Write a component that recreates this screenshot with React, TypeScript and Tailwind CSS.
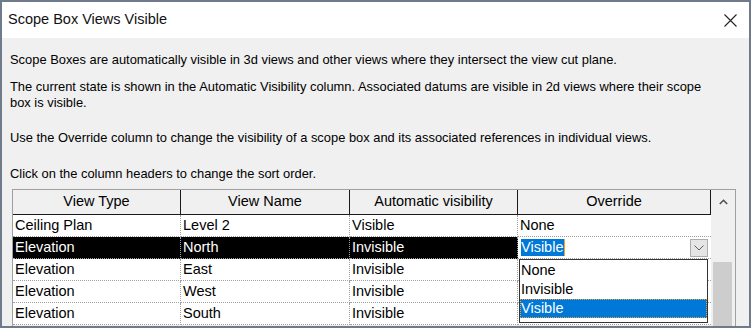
import React from 'react';

const rows = [
  { type: 'Ceiling Plan', name: 'Level 2', auto: 'Visible', override: 'None' },
  { type: 'Elevation', name: 'North', auto: 'Invisible', override: 'Visible' },
  { type: 'Elevation', name: 'East', auto: 'Invisible', override: '' },
  { type: 'Elevation', name: 'West', auto: 'Invisible', override: '' },
  { type: 'Elevation', name: 'South', auto: 'Invisible', override: '' },
];

const cell = 'h-[22px] leading-[21px] pl-[2px] border-r border-b border-dotted border-[#a0a0a0] whitespace-nowrap overflow-hidden';

function OverrideCombo() {
  return (
    <div className="relative h-[22px] border-b border-dotted border-[#a0a0a0] bg-white flex items-center justify-between pl-[3px] pr-[3px]">
      <span className="bg-[#0078d7] text-white leading-[17px] pr-[1px] border-r border-[#f0a030]">Visible</span>
      <button className="w-[18px] h-[18px] bg-[#e5e5e5] border border-[#adadad] flex items-center justify-center">
        <svg width="10" height="6" viewBox="0 0 10 6" fill="none" stroke="#606060" strokeWidth="1">
          <path d="M0.5 0.5 L5 5 L9.5 0.5" />
        </svg>
      </button>

      {/* open dropdown list */}
      <div className="absolute left-[1px] top-[22px] w-[189px] h-[64px] bg-white text-black border border-[#333] pt-[1px] z-10">
        <div className="h-[19px] leading-[19px] pl-[1px]">None</div>
        <div className="h-[19px] leading-[19px] pl-[1px]">Invisible</div>
        <div className="h-[19px] leading-[17px] bg-[#0078d7] text-white border border-dotted border-[#f0a030]">Visible</div>
      </div>
    </div>
  );
}

export default function App() {
  return (
    <div className="w-[754px] h-[331px] bg-white font-['Liberation_Sans',Arial,sans-serif] text-black">
      <div className="w-[751px] h-[328px] border-2 border-[#6f7b8b] flex flex-col overflow-hidden">
        {/* Title bar */}
        <div className="h-[36px] shrink-0 bg-white flex items-center justify-between pl-[6px] pr-[12px]">
          <span className="text-[14.5px] text-[#111]">Scope Box Views Visible</span>
          <svg width="13" height="13" viewBox="0 0 13 13" stroke="#222" strokeWidth="1.1">
            <path d="M0.5 0.5 L12.5 12.5 M12.5 0.5 L0.5 12.5" />
          </svg>
        </div>

        {/* Body */}
        <div className="flex-1 bg-[#f0f0f0] pl-[8px] pt-[14px] text-[12.9px] leading-[16px] overflow-hidden">
          <p className="whitespace-nowrap">Scope Boxes are automatically visible in 3d views and other views where they intersect the view cut plane.</p>
          <p className="mt-[11px] w-[734px]">
            The current state is shown in the Automatic Visibility column. Associated datums are visible in 2d views where their scope
            <br />
            box is visible.
          </p>
          <p className="mt-[19px] whitespace-nowrap">Use the Override column to change the visibility of a scope box and its associated references in individual views.</p>
          <p className="mt-[20px]">Click on the column headers to change the sort order.</p>

          {/* Table */}
          <div className="mt-[7px] ml-[2px] w-[724px] h-[140px] border-l border-t border-r border-[#a0a0a0] flex text-[14.5px]">
            <div className="w-[698px]">
              <div className="grid grid-cols-[168px_169px_168px_193px] h-[25px] bg-[#f0f0f0]">
                {['View Type', 'View Name', 'Automatic visibility', 'Override'].map((h) => (
                  <div key={h} className="border-r border-b border-[#1a1a1a] text-center leading-[23px]">
                    {h}
                  </div>
                ))}
              </div>
              {rows.map((r, i) => {
                const sel = i === 1;
                return (
                  <div key={i} className={`grid grid-cols-[168px_169px_168px_193px] ${sel ? 'bg-black text-white' : 'bg-white'}`}>
                    <div className={cell}>{r.type}</div>
                    <div className={cell}>{r.name}</div>
                    <div className={cell}>{r.auto}</div>
                    {sel ? (
                      <OverrideCombo />
                    ) : (
                      <div className={`${cell} border-r-0 bg-white`}>{r.override}</div>
                    )}
                  </div>
                );
              })}
            </div>

            {/* Scrollbar */}
            <div className="w-[24px] bg-[#f0f0f0] flex flex-col">
              <div className="h-[24px] flex items-center justify-center">
                <svg width="9" height="6" viewBox="0 0 9 6" fill="none" stroke="#505050" strokeWidth="1.6">
                  <path d="M0.8 5 L4.5 1.3 L8.2 5" />
                </svg>
              </div>
              <div className="flex-1 pt-[48px] px-[2px]">
                <div className="h-full w-[19px] bg-[#cdcdcd]" />
              </div>
            </div>
          </div>
        </div>
      </div>
    </div>
  );
}
